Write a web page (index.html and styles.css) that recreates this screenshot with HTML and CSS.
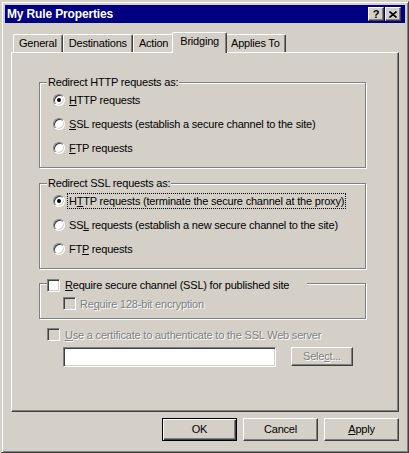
FILE: index.html
```html
<!DOCTYPE html>
<html>
<head>
<meta charset="utf-8">
<title>My Rule Properties</title>
<link rel="stylesheet" href="styles.css">
</head>
<body>
<div class="window">
  <div class="titlebar">
    <span class="title">My Rule Properties</span>
    <div class="caption-buttons">
      <span class="cbtn help">?</span>
      <span class="cbtn close"><svg width="8" height="7" viewBox="0 0 8 7"><path d="M0.5 0.5 L7.5 6.5 M7.5 0.5 L0.5 6.5" stroke="#000" stroke-width="1.6" fill="none"/></svg></span>
    </div>
  </div>
  <div class="client">
    <div class="tabs">
      <div class="tab">General</div>
      <div class="tab">Destinations</div>
      <div class="tab">Action</div>
      <div class="tab selected">Bridging</div>
      <div class="tab">Applies To</div>
    </div>
    <div class="panel">
      <div class="group">
        <div class="group-title">Redirect HTTP requests as:</div>
        <div class="option"><span class="radio checked"></span><span class="label"><u>H</u>TTP requests</span></div>
        <div class="option"><span class="radio"></span><span class="label"><u>S</u>SL requests (establish a secure channel to the site)</span></div>
        <div class="option"><span class="radio"></span><span class="label"><u>F</u>TP requests</span></div>
      </div>
      <div class="group group-ssl">
        <div class="group-title">Redirect SSL requests as:</div>
        <div class="option"><span class="radio checked"></span><span class="label focused">H<u>T</u>TP requests (terminate the secure channel at the proxy)</span></div>
        <div class="option"><span class="radio"></span><span class="label">SS<u>L</u> requests (establish a new secure channel to the site)</span></div>
        <div class="option"><span class="radio"></span><span class="label">FT<u>P</u> requests</span></div>
      </div>
      <div class="group group-secure">
        <div class="group-title check-title"><span class="check"></span><span class="label"><u>R</u>equire secure channel (SSL) for published site</span></div>
        <div class="check-row sub disabled"><span class="check off"></span><span class="label">Re<u>q</u>uire 128-bit encryption</span></div>
      </div>
      <div class="check-row cert disabled"><span class="check off"></span><span class="label"><u>U</u>se a certificate to authenticate to the SSL Web server</span></div>
      <div class="cert-row">
        <div class="textbox"></div>
        <div class="btn small disabled">Sele<u>c</u>t...</div>
      </div>
    </div>
    <div class="buttons">
      <div class="btn default">OK</div>
      <div class="btn">Cancel</div>
      <div class="btn"><u>A</u>pply</div>
    </div>
  </div>
</div>
</body>
</html>
```
FILE: styles.css
```css
html, body {
  margin: 0;
  padding: 0;
}
body {
  width: 409px;
  height: 453px;
  overflow: hidden;
  background: #d4d0c8;
  font-family: "Liberation Sans", Arial, sans-serif;
  font-size: 11px;
  letter-spacing: -0.2px;
  color: #000;
}
u { text-decoration: underline; text-underline-offset: 1px; }

.window {
  margin: 1px 0 0 1px;
  width: 408px;
  height: 452px;
  box-sizing: border-box;
  border: 1px solid;
  border-color: #d4d0c8 #404040 #404040 #d4d0c8;
  box-shadow: inset 1px 1px 0 #fff, inset -1px -1px 0 #808080;
  padding: 3px;
  display: flex;
  flex-direction: column;
}

.titlebar {
  height: 18px;
  flex: none;
  background: #000080;
  display: flex;
  align-items: center;
  justify-content: space-between;
  padding: 0 4px 0 2px;
}
.title {
  color: #fff;
  font-weight: bold;
  font-size: 12px;
  letter-spacing: -0.15px;
  line-height: 14px;
}
.caption-buttons {
  display: flex;
  gap: 1px;
}
.cbtn {
  width: 16px;
  height: 14px;
  box-sizing: border-box;
  border: 1px solid;
  border-color: #fff #404040 #404040 #fff;
  box-shadow: inset -1px -1px 0 #808080;
  background: #d4d0c8;
  display: flex;
  align-items: center;
  justify-content: center;
  font-weight: bold;
  font-size: 11px;
  line-height: 11px;
  letter-spacing: 0;
}
.cbtn svg { display: block; }

.client {
  flex: 1;
  display: flex;
  flex-direction: column;
}

.tabs {
  display: flex;
  align-items: flex-end;
  padding: 9px 0 0 2px;
  margin: 0 6px;
}
.tab {
  height: 18px;
  box-sizing: border-box;
  border-left: 1px solid #fff;
  border-top: 1px solid #fff;
  border-right: 1px solid #404040;
  border-radius: 2px 2px 0 0;
  box-shadow: inset -1px 0 0 #808080;
  padding: 0 5px;
  line-height: 16px;
  white-space: nowrap;
}
.tab.selected {
  position: relative;
  z-index: 1;
  height: 21px;
  margin: 0 -2px -1px;
  padding: 0 7px;
  line-height: 17px;
  background: #d4d0c8;
}

.panel {
  height: 360px;
  margin: 0 6px;
  box-sizing: border-box;
  border: 1px solid;
  border-color: #fff #404040 #404040 #fff;
  box-shadow: inset -1px -1px 0 #808080;
  padding: 29px 0 0 27px;
  display: flex;
  flex-direction: column;
  align-items: flex-start;
}

.group {
  position: relative;
  width: 327px;
  box-sizing: border-box;
  border: 1px solid #808080;
  box-shadow: 1px 1px 0 #fff, inset 1px 1px 0 #fff;
  padding: 5px 0 7px 13px;
}
.group-ssl { margin-top: 15px; }
.group-secure {
  margin-top: 14px;
  padding: 13px 0 8px 23px;
}
.group-title {
  position: absolute;
  top: -7px;
  left: 7px;
  padding: 0 1px;
  line-height: 13px;
  background: #d4d0c8;
  white-space: nowrap;
}
.check-title {
  display: flex;
  align-items: center;
  padding: 0 16px 0 0;
}

.option {
  height: 24px;
  display: flex;
  align-items: center;
}
.label {
  display: inline-block;
  margin-left: 2px;
  padding: 0 1px;
  border: 1px solid transparent;
  line-height: 14px;
  white-space: nowrap;
}
.label.focused { border: 1px dotted #000; }

.radio {
  flex: none;
  position: relative;
  width: 12px;
  height: 12px;
  box-sizing: border-box;
  border-radius: 50%;
  border: 1px solid;
  border-color: #808080 #fff #fff #808080;
  box-shadow: inset 1px 1px 0 #404040, inset -1px -1px 0 #d4d0c8;
  background: #fff;
}
.radio.checked::after {
  content: "";
  position: absolute;
  left: 3px;
  top: 3px;
  width: 4px;
  height: 4px;
  border-radius: 50%;
  background: #000;
}

.check {
  flex: none;
  width: 13px;
  height: 13px;
  box-sizing: border-box;
  border: 1px solid;
  border-color: #808080 #fff #fff #808080;
  box-shadow: inset 1px 1px 0 #404040, inset -1px -1px 0 #d4d0c8;
  background: #fff;
}
.check.off { background: #d4d0c8; }
.check + .label { margin-left: 3px; }

.check-row {
  height: 13px;
  display: flex;
  align-items: center;
}
.check-row.sub .label { margin-left: 2px; }
.check-row.cert {
  margin: 9px 0 0 8px;
}
.disabled .label,
.btn.disabled {
  color: #808080;
  text-shadow: 1px 1px 0 #fff;
}

.cert-row {
  display: flex;
  align-items: flex-start;
  margin: 6px 0 0 24px;
}
.textbox {
  width: 213px;
  height: 20px;
  box-sizing: border-box;
  border: 1px solid;
  border-color: #808080 #fff #fff #808080;
  box-shadow: inset 1px 1px 0 #404040, inset -1px -1px 0 #d4d0c8;
  background: #fff;
}

.btn {
  width: 75px;
  height: 23px;
  box-sizing: border-box;
  border: 1px solid;
  border-color: #fff #404040 #404040 #fff;
  box-shadow: inset -1px -1px 0 #808080;
  display: flex;
  align-items: center;
  justify-content: center;
  line-height: 13px;
}
.btn.small {
  width: 62px;
  height: 19px;
  margin-left: 15px;
}
.btn.default {
  border-color: #000;
  box-shadow: inset 1px 1px 0 #fff, inset -1px -1px 0 #404040, inset -2px -2px 0 #808080;
}

.buttons {
  display: flex;
  justify-content: flex-end;
  gap: 6px;
  margin: 6px 6px 0 0;
}
```
